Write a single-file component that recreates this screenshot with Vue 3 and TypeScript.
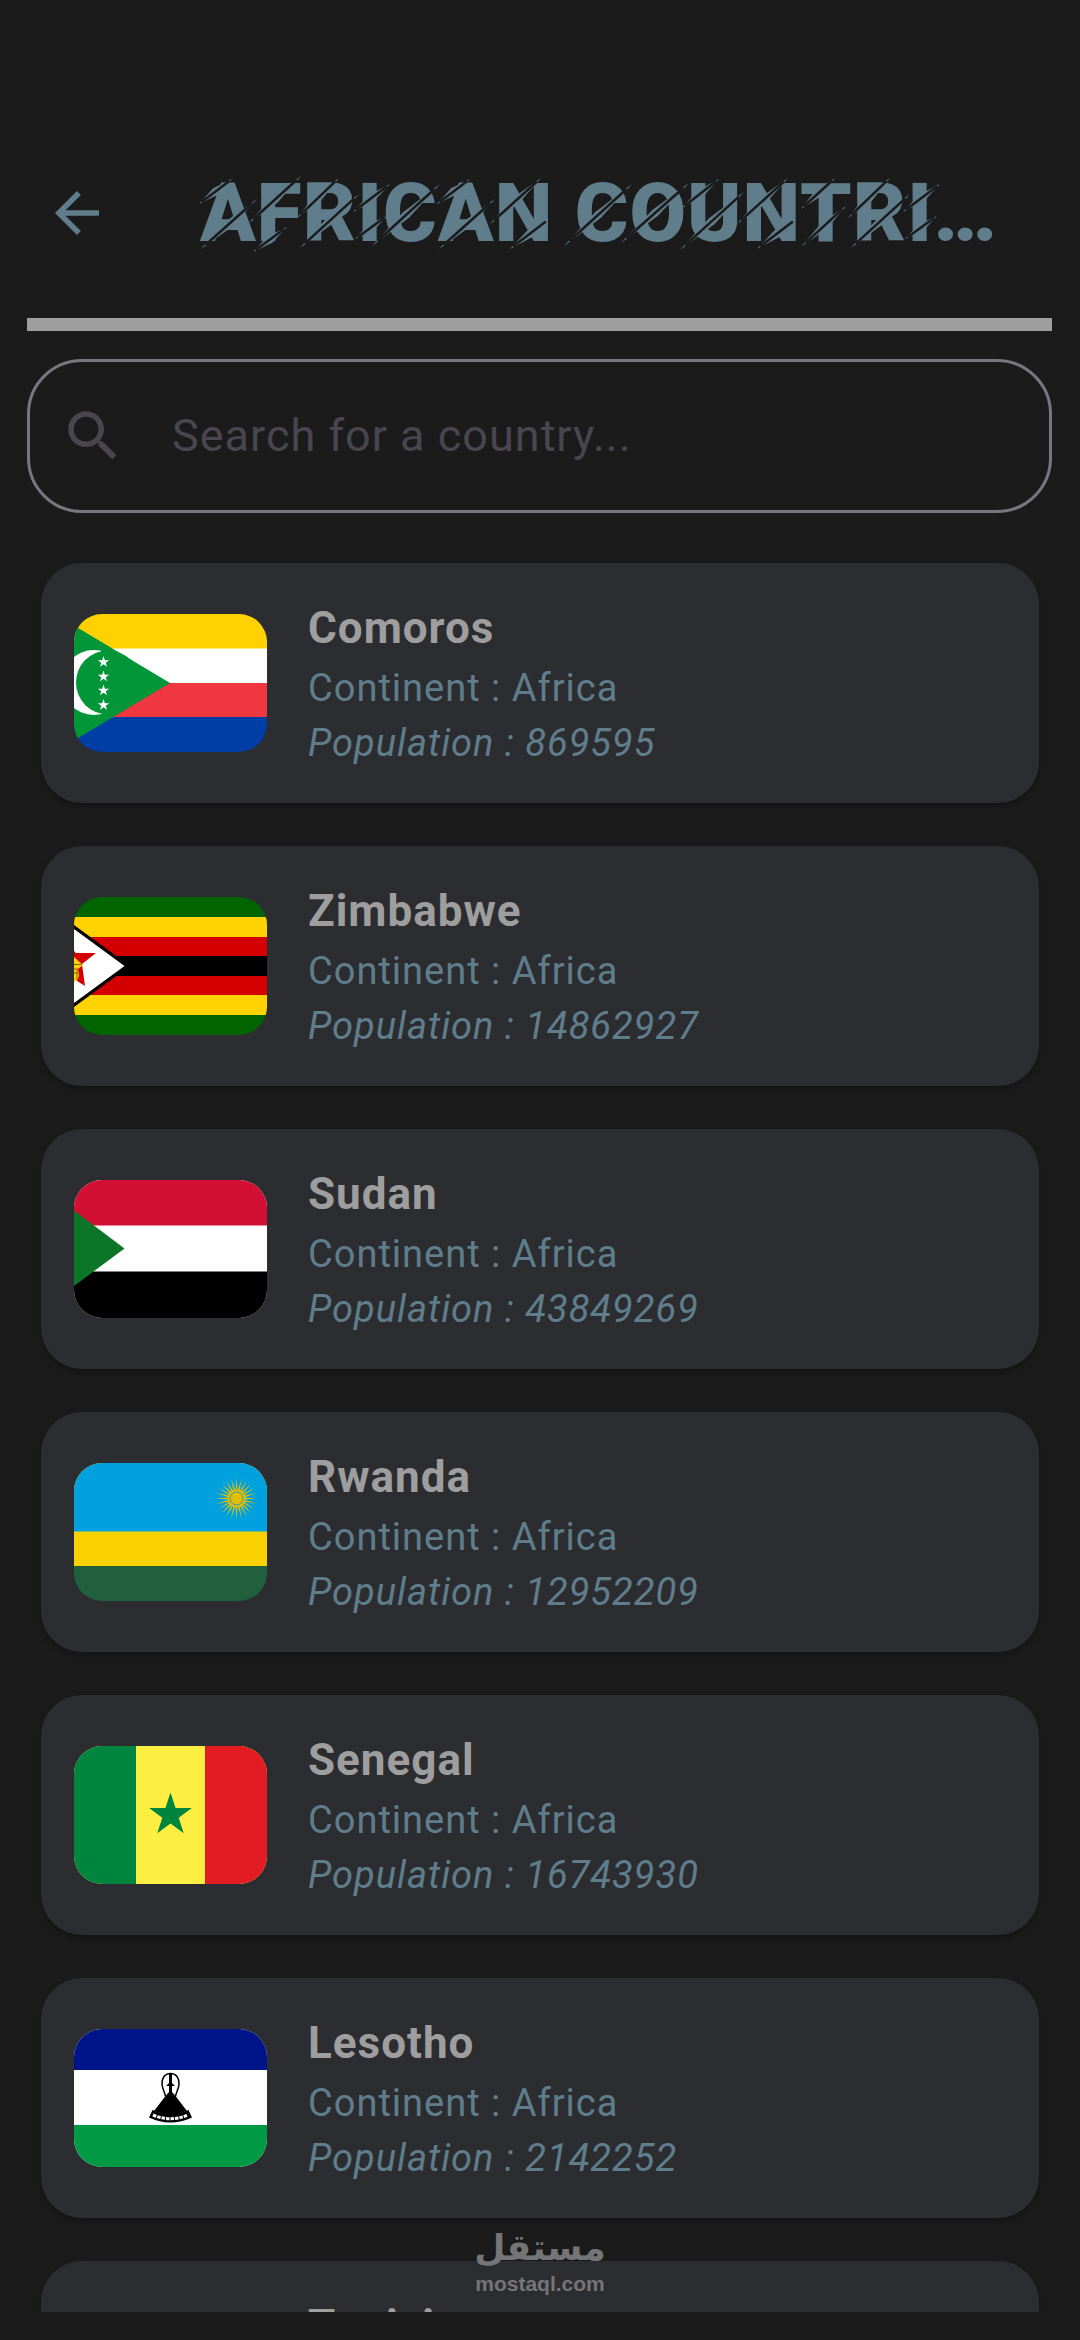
<script setup lang="ts">
import { computed, ref } from 'vue'

interface Country {
  name: string
  code: string
  continent: string
  population: number
}

const countries: Country[] = [
  { name: 'Comoros', code: 'km', continent: 'Africa', population: 869595 },
  { name: 'Zimbabwe', code: 'zw', continent: 'Africa', population: 14862927 },
  { name: 'Sudan', code: 'sd', continent: 'Africa', population: 43849269 },
  { name: 'Rwanda', code: 'rw', continent: 'Africa', population: 12952209 },
  { name: 'Senegal', code: 'sn', continent: 'Africa', population: 16743930 },
  { name: 'Lesotho', code: 'ls', continent: 'Africa', population: 2142252 },
  { name: 'Tunisia', code: 'tn', continent: 'Africa', population: 11818618 },
]

const query = ref('')
const visible = computed(() =>
  countries.filter((c) => c.name.toLowerCase().includes(query.value.trim().toLowerCase())),
)

// Points of a regular five-pointed star
function star(cx: number, cy: number, r: number): string {
  return Array.from({ length: 10 }, (_, i) => {
    const radius = i % 2 ? r * 0.382 : r
    const a = (Math.PI * i) / 5 - Math.PI / 2
    return `${(cx + radius * Math.cos(a)).toFixed(2)},${(cy + radius * Math.sin(a)).toFixed(2)}`
  }).join(' ')
}

const rays = Array.from({ length: 24 }, (_, i) => i * 15)

// Claw cuts across the heading: lower-left and upper-right ends, from each letter's left side
type Cut = [number, number, number, number]
const cuts: Record<string, Cut[]> = {
  A: [[-1, 39, 32, 14], [1, 84, 57, 34]],
  F: [[-10, 58, 42, 11], [-6, 87, 28, 62]],
  R: [[-8, 53, 34, 13], [-5, 83, 54, 29]],
  I: [[-6, 47, 31, 19], [-4, 74, 28, 51]],
  C: [[-13, 81, 55, 19]],
  N: [[-8, 59, 43, 13], [12, 84, 51, 54]],
  O: [[-11, 78, 57, 18]],
  U: [[-8, 43, 29, 14], [-10, 85, 54, 27]],
  T: [[0, 44, 34, 13], [1, 81, 45, 41]],
}
const letters: [string, number][] = [
  ['A', 0], ['F', 59], ['R', 105], ['I', 159], ['C', 185], ['A', 238], ['N', 298],
  ['C', 377], ['O', 432], ['U', 490], ['N', 545], ['T', 601], ['R', 656], ['I', 709],
]
const slashes = letters.flatMap(([letter, x]) =>
  cuts[letter].map(([x1, y1, x2, y2]) => {
    const [ax, bx] = [x1 + x, x2 + x]
    const [dx, dy] = [bx - ax, y2 - y1]
    const [mx, my] = [(ax + bx) / 2, (y1 + y2) / 2]
    const len = Math.hypot(dx, dy)
    const [nx, ny] = [-dy / len, dx / len]
    return {
      blade: `${ax},${y1} ${mx - nx * 4},${my - ny * 4} ${bx},${y2} ${mx + nx * 4},${my + ny * 4}`,
      gap: `M${ax + dx * 0.08} ${y1 + dy * 0.08}L${bx - dx * 0.08} ${y2 - dy * 0.08}`,
    }
  }),
)
</script>

<template>
  <main class="screen">
    <header class="bar">
      <button class="back" type="button" aria-label="Back">
        <svg viewBox="0 0 24 24" aria-hidden="true">
          <path d="M20 11H7.83l5.59-5.59L12 4l-8 8 8 8 1.41-1.41L7.83 13H20v-2z" />
        </svg>
      </button>
      <h1 class="title">
        AFRICAN COUNTRI…
        <svg class="slashes" viewBox="0 0 790 96" aria-hidden="true">
          <g v-for="(s, i) in slashes" :key="i">
            <polygon :points="s.blade" fill="#607d8b" />
            <path :d="s.gap" stroke="#1b1b1b" stroke-width="2.500" />
          </g>
        </svg>
      </h1>
    </header>
    <hr class="rule" />

    <label class="search">
      <svg viewBox="0 0 24 24" aria-hidden="true">
        <path
          d="M15.5 14h-.79l-.28-.27C15.41 12.59 16 11.11 16 9.5 16 5.91 13.09 3 9.5 3S3 5.91 3 9.5 5.91 16 9.5 16c1.61 0 3.09-.59 4.23-1.57l.27.28v.79l5 4.99L20.49 19l-4.99-5zm-6 0C7.01 14 5 11.99 5 9.5S7.01 5 9.5 5 14 7.01 14 9.5 11.99 14 9.5 14z"
        />
      </svg>
      <input v-model="query" type="text" placeholder="Search for a country..." aria-label="Search for a country" />
    </label>

    <ul class="list">
      <li v-for="c in visible" :key="c.code" class="card">
        <svg class="flag" viewBox="0 0 193 138" preserveAspectRatio="none" aria-hidden="true">
          <template v-if="c.code === 'km'">
            <rect width="193" height="35" fill="#ffd100" />
            <rect y="34.500" width="193" height="35" fill="#fff" />
            <rect y="69" width="193" height="35" fill="#f0363f" />
            <rect y="103" width="193" height="35" fill="#003da5" />
            <path d="M0 11.600 96 69 0 126.400z" fill="#029639" />
            <circle cx="20" cy="68.500" r="32.500" fill="#fff" />
            <circle cx="34" cy="68.500" r="32" fill="#029639" />
            <polygon v-for="y in [48, 62.500, 76.500, 91]" :key="y" :points="star(29.5, y, 6)" fill="#fff" />
          </template>
          <template v-else-if="c.code === 'zw'">
            <rect width="193" height="138" fill="#006400" />
            <rect y="20" width="193" height="98" fill="#ffd200" />
            <rect y="40" width="193" height="58" fill="#d40000" />
            <rect y="59" width="193" height="20" fill="#000" />
            <path d="M0 28 56 69 0 110z" fill="#000" />
            <path d="M0 32 50.500 69 0 106z" fill="#fff" />
            <path d="M0 54 2 56H22L8 67 11 89 0 82z" fill="#d40000" />
            <path d="M0 60 9 68 4 72 5 79 3 84H0z" fill="#ffd200" />
            <path d="M0 67.500H8M0 72H4M0 76H4M3 72V83" fill="none" stroke="#8a6500" />
          </template>
          <template v-else-if="c.code === 'sd'">
            <rect width="193" height="138" fill="#fff" />
            <rect width="193" height="45.500" fill="#d21034" />
            <rect y="91.500" width="193" height="47" fill="#000" />
            <path d="M0 30.500 50.500 68.500 0 106z" fill="#0c7528" />
          </template>
          <template v-else-if="c.code === 'rw'">
            <rect width="193" height="138" fill="#20603d" />
            <rect width="193" height="103" fill="#fad201" />
            <rect width="193" height="68.500" fill="#00a1de" />
            <g fill="#e5be01">
              <path
                v-for="a in rays"
                :key="a"
                d="M161.500 28.500 162.500 14.500 163.500 28.500z"
                :transform="`rotate(${a} 162.5 35.500)`"
              />
              <circle cx="162.500" cy="35.500" r="8.500" />
            </g>
            <circle cx="162.500" cy="35.500" r="6.500" fill="#e5be01" stroke="#2ba2b4" />
          </template>
          <template v-else-if="c.code === 'sn'">
            <rect width="193" height="138" fill="#fdef42" />
            <rect width="62" height="138" fill="#00853f" />
            <rect x="131" width="62" height="138" fill="#e31b23" />
            <polygon :points="star(96.5, 69, 22.5)" fill="#00853f" />
          </template>
          <template v-else-if="c.code === 'ls'">
            <rect width="193" height="138" fill="#fff" />
            <rect width="193" height="41" fill="#001489" />
            <rect y="96" width="193" height="42" fill="#009a44" />
            <path
              d="M96.500 44.500c-6 0-9 5-8.500 11 .5 5 3 8 3.500 12M96.500 44.500c6 0 9 5 8.500 11-.5 5-3 8-3.500 12"
              fill="none"
              stroke="#000"
              stroke-width="1.500"
            />
            <path d="M95 44h3v10l3 3h-3v6l3.500 4L113 82q-16.500 7-33 0L91.500 67l3.500-4v-6h-3l3-3z" />
            <path d="M78.500 81 75 88.500q21.500 10 43 0L114.500 81q-18 8-36 0z" />
            <path d="M79 86q17.500 7.500 35 0" fill="none" stroke="#fff" stroke-width="3" stroke-dasharray="3.500 1" />
          </template>
          <template v-else>
            <rect width="193" height="138" fill="#e70013" />
            <circle cx="96.500" cy="69" r="34" fill="#fff" />
            <circle cx="96.500" cy="69" r="26" fill="#e70013" />
            <circle cx="103" cy="69" r="21" fill="#fff" />
            <polygon :points="star(103, 69, 15)" fill="#e70013" />
          </template>
        </svg>
        <div class="info">
          <h2 class="name">{{ c.name }}</h2>
          <p class="line">Continent : {{ c.continent }}</p>
          <p class="line population">Population : {{ c.population }}</p>
        </div>
      </li>
    </ul>

    <div class="watermark">
      <span class="brand" lang="ar" dir="rtl">مستقل</span>
      <span class="site">mostaql.com</span>
    </div>
  </main>
</template>

<style>
body {
  margin: 0;
  background: #1b1b1b;
}
</style>

<style scoped>
.screen {
  position: relative;
  box-sizing: border-box;
  height: 100vh;
  padding: 158px 28px 28px 27px;
  display: flex;
  flex-direction: column;
  background: #1b1b1b;
  color: #607d8b;
  font-family: Roboto, sans-serif;
}

.bar {
  flex: none;
  display: flex;
  align-items: center;
  height: 110px;
  padding-left: 17px;
}

.back {
  flex: none;
  width: 66px;
  height: 66px;
  padding: 0;
  border: 0;
  background: none;
  color: inherit;
}

.back svg {
  display: block;
  fill: currentColor;
}

.title {
  position: relative;
  margin: 0 0 0 90px;
  font-size: 82px;
  font-weight: 900;
  line-height: 96px;
  letter-spacing: 1px;
  white-space: nowrap;
}

.slashes {
  position: absolute;
  top: 0;
  left: 0;
  width: 790px;
  height: 96px;
  overflow: visible;
}

.rule {
  flex: none;
  width: 100%;
  height: 13px;
  margin: 50px 0 28px;
  border: 0;
  background: #9e9e9e;
}

.search {
  flex: none;
  box-sizing: border-box;
  display: flex;
  align-items: center;
  gap: 46px;
  height: 154px;
  padding: 0 30px;
  border: 3px solid #79767f;
  border-radius: 55px;
}

.search svg {
  flex: none;
  width: 66px;
  height: 66px;
  fill: #49464f;
}

.search input {
  flex: 1;
  min-width: 0;
  padding: 0;
  border: 0;
  outline: 0;
  background: none;
  color: #9e9e9e;
  font: 45px/66px Roboto, sans-serif;
  letter-spacing: 1px;
}

.search input::placeholder {
  color: #49464f;
  opacity: 1;
}

.list {
  flex: 1;
  min-height: 0;
  margin: 0;
  padding: 50px 13px 0 14px;
  display: flex;
  flex-direction: column;
  gap: 43px;
  overflow-y: auto;
  scrollbar-width: none;
  list-style: none;
}

.card {
  flex: none;
  display: flex;
  align-items: center;
  gap: 41px;
  padding: 32px 33px;
  border-radius: 41px;
  background: #2c2d31;
  box-shadow: 0 3px 6px rgba(0, 0, 0, 0.3);
}

.flag {
  flex: none;
  width: 193px;
  height: 138px;
  border-radius: 28px;
}

.name,
.line {
  margin: 0;
}

.name {
  color: #9e9e9e;
  font-size: 44px;
  font-weight: 700;
  line-height: 66px;
  letter-spacing: 1px;
}

.line {
  font-size: 38px;
  line-height: 55px;
  letter-spacing: 1px;
}

.population {
  font-style: italic;
}

.watermark {
  position: absolute;
  left: 0;
  right: 0;
  bottom: 44px;
  display: flex;
  flex-direction: column;
  align-items: center;
  color: #757578;
  pointer-events: none;
}

.brand {
  font: 700 36px/48px "DejaVu Sans", sans-serif;
}

.site {
  font: 700 21px/24px "Liberation Sans", sans-serif;
}
</style>
